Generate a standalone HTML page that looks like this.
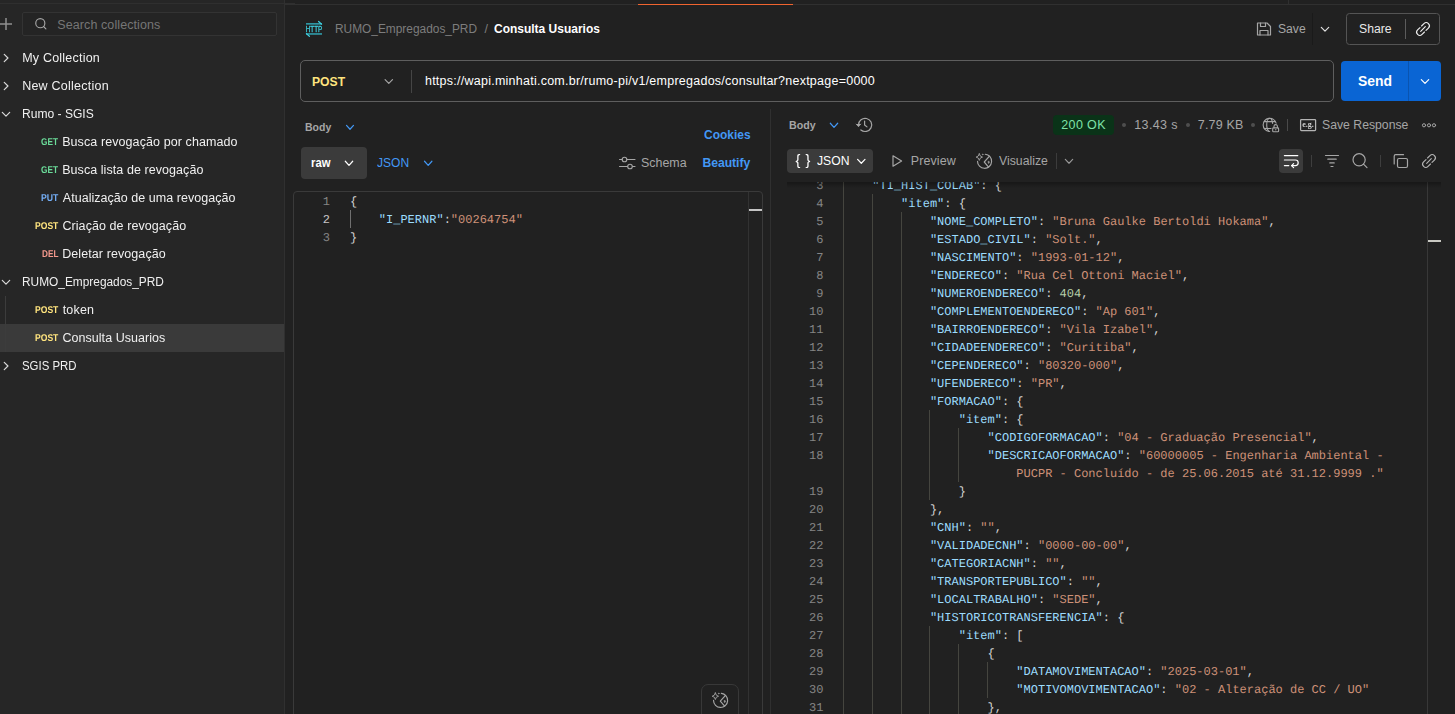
<!DOCTYPE html>
<html lang="pt-BR"><head><meta charset="utf-8"><title>Postman - Consulta Usuarios</title>
<style>
html,body{margin:0;padding:0;}
body{width:1455px;height:714px;overflow:hidden;background:#212121;position:relative;font-family:"Liberation Sans", sans-serif;}
.t{position:absolute;white-space:pre;line-height:16px;}
.b{position:absolute;box-sizing:border-box;}
.ln{position:absolute;width:40px;text-align:right;font-family:"Liberation Mono", monospace;font-size:12px;line-height:18px;color:#858585;white-space:pre;text-rendering:geometricPrecision;}
.cl{position:absolute;font-family:"Liberation Mono", monospace;font-size:12px;line-height:18px;color:#d4d4d4;white-space:pre;text-rendering:geometricPrecision;}
svg.ov{position:absolute;left:0;top:0;}
#app{position:absolute;left:0;top:0;width:1455px;height:714px;}
#sbl{position:absolute;left:0;top:40px;width:284px;height:674px;will-change:transform;}
#sbl .t{margin-top:-40px;}
#respwrap{position:absolute;left:771px;top:182px;width:684px;height:532px;overflow:hidden;}
#respin{position:absolute;left:-771px;top:-182px;width:1455px;height:714px;}
</style></head>
<body>
<div id="app">

<div class="b" style="left:0;top:0;width:284px;height:714px;background:#262626"></div>
<div class="b" style="left:0;top:3px;width:295px;height:1px;background:#2f2f2f"></div>
<div class="b" style="left:285px;top:4px;width:1170px;height:1px;background:#303030"></div>
<div class="b" style="left:638px;top:4px;width:155px;height:1px;background:#f0642f"></div>
<div class="b" style="left:284px;top:0;width:1px;height:714px;background:#303030"></div>
<div class="b" style="left:1288px;top:0;width:1px;height:4px;background:#303030"></div>
<div class="b" style="left:22px;top:12px;width:255px;height:24px;border:1px solid #333333;border-radius:2px;background:#242424"></div>
<div class="b" style="left:0;top:324px;width:284px;height:28px;background:#3a3a3a"></div>
<div class="b" style="left:5px;top:296px;width:1px;height:56px;background:#3c3c3c"></div>
<div class="b" style="left:300px;top:60px;width:1034px;height:42px;border:1px solid #5e5e5e;border-radius:5px"></div>
<div class="b" style="left:411px;top:70px;width:1px;height:23px;background:#454545"></div>
<div class="b" style="left:1341px;top:61px;width:100px;height:40px;background:#0a65d4;border-radius:4px"></div>
<div class="b" style="left:1408px;top:61px;width:1px;height:40px;background:#0a54b0"></div>
<div class="b" style="left:1346px;top:13px;width:94px;height:32px;border:1px solid #545454;border-radius:3.5px"></div>
<div class="b" style="left:1405px;top:19px;width:1px;height:20px;background:#5c5c5c"></div>
<div class="b" style="left:1312px;top:13px;width:1px;height:32px;background:#1a1a1a"></div>
<div class="b" style="left:770px;top:109px;width:1px;height:605px;background:#303030"></div>
<div class="b" style="left:301px;top:147px;width:66px;height:32px;background:#3b3b3b;border-radius:4px"></div>
<div class="b" style="left:293px;top:191px;width:470px;height:530px;border:1px solid #3a3a3a;border-radius:4px"></div>
<div class="b" style="left:748px;top:192px;width:1px;height:522px;background:#323232"></div>
<div class="b" style="left:749px;top:208.5px;width:13px;height:2px;background:#c4c4c4"></div>
<div class="b" style="left:350px;top:210px;width:1px;height:18px;background:#707070"></div>
<div class="b" style="left:701px;top:684px;width:38px;height:40px;border:1px solid #383838;border-radius:7px"></div>
<div class="b" style="left:1053px;top:115px;width:61px;height:20px;background:#0a3318;border-radius:4px"></div>
<div class="b" style="left:787px;top:149px;width:86px;height:24px;background:#3b3b3b;border-radius:4px"></div>
<div class="b" style="left:1279px;top:149px;width:24px;height:24px;background:#3b3b3b;border-radius:4px"></div>
<div class="b" style="left:1287px;top:119px;width:1px;height:12px;background:#4a4a4a"></div>
<div class="b" style="left:1056px;top:153px;width:1px;height:16px;background:#3c3c3c"></div>
<div class="b" style="left:1311px;top:155px;width:1px;height:12px;background:#3e3e3e"></div>
<div class="b" style="left:1380px;top:155px;width:1px;height:12px;background:#3e3e3e"></div>

<div class="b" style="left:1122px;top:123px;width:4px;height:4px;border-radius:2px;background:#4e4e4e"></div><div class="b" style="left:1186px;top:123px;width:4px;height:4px;border-radius:2px;background:#4e4e4e"></div><div class="b" style="left:1251px;top:123px;width:4px;height:4px;border-radius:2px;background:#4e4e4e"></div>
<span class="ln" style="left:290px;top:193px">1</span>
<span class="cl" style="left:350px;top:193px"><span style="color:#d4d4d4">{</span></span>
<span class="ln" style="left:290px;top:211px;color:#c6c6c6">2</span>
<span class="cl" style="left:350px;top:211px">    <span style="color:#9cdcfe">"I_PERNR"</span><span style="color:#d4d4d4">:</span><span style="color:#ce9178">"00264754"</span></span>
<span class="ln" style="left:290px;top:229px">3</span>
<span class="cl" style="left:350px;top:229px"><span style="color:#d4d4d4">}</span></span>

<div id="respwrap"><div id="respin">
<svg class="ov" width="1455" height="714" viewBox="0 0 1455 714"><rect x="843" y="176" width="1" height="18" fill="#45453f"/>
<rect x="843" y="194" width="1" height="18" fill="#45453f"/>
<rect x="872" y="194" width="1" height="18" fill="#45453f"/>
<rect x="843" y="212" width="1" height="18" fill="#45453f"/>
<rect x="872" y="212" width="1" height="18" fill="#45453f"/>
<rect x="901" y="212" width="1" height="18" fill="#45453f"/>
<rect x="843" y="230" width="1" height="18" fill="#45453f"/>
<rect x="872" y="230" width="1" height="18" fill="#45453f"/>
<rect x="901" y="230" width="1" height="18" fill="#45453f"/>
<rect x="843" y="248" width="1" height="18" fill="#45453f"/>
<rect x="872" y="248" width="1" height="18" fill="#45453f"/>
<rect x="901" y="248" width="1" height="18" fill="#45453f"/>
<rect x="843" y="266" width="1" height="18" fill="#45453f"/>
<rect x="872" y="266" width="1" height="18" fill="#45453f"/>
<rect x="901" y="266" width="1" height="18" fill="#45453f"/>
<rect x="843" y="284" width="1" height="18" fill="#45453f"/>
<rect x="872" y="284" width="1" height="18" fill="#45453f"/>
<rect x="901" y="284" width="1" height="18" fill="#45453f"/>
<rect x="843" y="302" width="1" height="18" fill="#45453f"/>
<rect x="872" y="302" width="1" height="18" fill="#45453f"/>
<rect x="901" y="302" width="1" height="18" fill="#45453f"/>
<rect x="843" y="320" width="1" height="18" fill="#45453f"/>
<rect x="872" y="320" width="1" height="18" fill="#45453f"/>
<rect x="901" y="320" width="1" height="18" fill="#45453f"/>
<rect x="843" y="338" width="1" height="18" fill="#45453f"/>
<rect x="872" y="338" width="1" height="18" fill="#45453f"/>
<rect x="901" y="338" width="1" height="18" fill="#45453f"/>
<rect x="843" y="356" width="1" height="18" fill="#45453f"/>
<rect x="872" y="356" width="1" height="18" fill="#45453f"/>
<rect x="901" y="356" width="1" height="18" fill="#45453f"/>
<rect x="843" y="374" width="1" height="18" fill="#45453f"/>
<rect x="872" y="374" width="1" height="18" fill="#45453f"/>
<rect x="901" y="374" width="1" height="18" fill="#45453f"/>
<rect x="843" y="392" width="1" height="18" fill="#45453f"/>
<rect x="872" y="392" width="1" height="18" fill="#45453f"/>
<rect x="901" y="392" width="1" height="18" fill="#45453f"/>
<rect x="843" y="410" width="1" height="18" fill="#45453f"/>
<rect x="872" y="410" width="1" height="18" fill="#45453f"/>
<rect x="901" y="410" width="1" height="18" fill="#45453f"/>
<rect x="929" y="410" width="1" height="18" fill="#45453f"/>
<rect x="843" y="428" width="1" height="18" fill="#45453f"/>
<rect x="872" y="428" width="1" height="18" fill="#45453f"/>
<rect x="901" y="428" width="1" height="18" fill="#45453f"/>
<rect x="929" y="428" width="1" height="18" fill="#45453f"/>
<rect x="958" y="428" width="1" height="18" fill="#45453f"/>
<rect x="843" y="446" width="1" height="18" fill="#45453f"/>
<rect x="872" y="446" width="1" height="18" fill="#45453f"/>
<rect x="901" y="446" width="1" height="18" fill="#45453f"/>
<rect x="929" y="446" width="1" height="18" fill="#45453f"/>
<rect x="958" y="446" width="1" height="18" fill="#45453f"/>
<rect x="843" y="464" width="1" height="18" fill="#45453f"/>
<rect x="872" y="464" width="1" height="18" fill="#45453f"/>
<rect x="901" y="464" width="1" height="18" fill="#45453f"/>
<rect x="929" y="464" width="1" height="18" fill="#45453f"/>
<rect x="958" y="464" width="1" height="18" fill="#45453f"/>
<rect x="843" y="482" width="1" height="18" fill="#45453f"/>
<rect x="872" y="482" width="1" height="18" fill="#45453f"/>
<rect x="901" y="482" width="1" height="18" fill="#45453f"/>
<rect x="929" y="482" width="1" height="18" fill="#45453f"/>
<rect x="843" y="500" width="1" height="18" fill="#45453f"/>
<rect x="872" y="500" width="1" height="18" fill="#45453f"/>
<rect x="901" y="500" width="1" height="18" fill="#45453f"/>
<rect x="843" y="518" width="1" height="18" fill="#45453f"/>
<rect x="872" y="518" width="1" height="18" fill="#45453f"/>
<rect x="901" y="518" width="1" height="18" fill="#45453f"/>
<rect x="843" y="536" width="1" height="18" fill="#45453f"/>
<rect x="872" y="536" width="1" height="18" fill="#45453f"/>
<rect x="901" y="536" width="1" height="18" fill="#45453f"/>
<rect x="843" y="554" width="1" height="18" fill="#45453f"/>
<rect x="872" y="554" width="1" height="18" fill="#45453f"/>
<rect x="901" y="554" width="1" height="18" fill="#45453f"/>
<rect x="843" y="572" width="1" height="18" fill="#45453f"/>
<rect x="872" y="572" width="1" height="18" fill="#45453f"/>
<rect x="901" y="572" width="1" height="18" fill="#45453f"/>
<rect x="843" y="590" width="1" height="18" fill="#45453f"/>
<rect x="872" y="590" width="1" height="18" fill="#45453f"/>
<rect x="901" y="590" width="1" height="18" fill="#45453f"/>
<rect x="843" y="608" width="1" height="18" fill="#45453f"/>
<rect x="872" y="608" width="1" height="18" fill="#45453f"/>
<rect x="901" y="608" width="1" height="18" fill="#45453f"/>
<rect x="843" y="626" width="1" height="18" fill="#45453f"/>
<rect x="872" y="626" width="1" height="18" fill="#45453f"/>
<rect x="901" y="626" width="1" height="18" fill="#45453f"/>
<rect x="929" y="626" width="1" height="18" fill="#45453f"/>
<rect x="843" y="644" width="1" height="18" fill="#45453f"/>
<rect x="872" y="644" width="1" height="18" fill="#45453f"/>
<rect x="901" y="644" width="1" height="18" fill="#45453f"/>
<rect x="929" y="644" width="1" height="18" fill="#45453f"/>
<rect x="958" y="644" width="1" height="18" fill="#45453f"/>
<rect x="843" y="662" width="1" height="18" fill="#45453f"/>
<rect x="872" y="662" width="1" height="18" fill="#45453f"/>
<rect x="901" y="662" width="1" height="18" fill="#45453f"/>
<rect x="929" y="662" width="1" height="18" fill="#45453f"/>
<rect x="958" y="662" width="1" height="18" fill="#45453f"/>
<rect x="987" y="662" width="1" height="18" fill="#45453f"/>
<rect x="843" y="680" width="1" height="18" fill="#45453f"/>
<rect x="872" y="680" width="1" height="18" fill="#45453f"/>
<rect x="901" y="680" width="1" height="18" fill="#45453f"/>
<rect x="929" y="680" width="1" height="18" fill="#45453f"/>
<rect x="958" y="680" width="1" height="18" fill="#45453f"/>
<rect x="987" y="680" width="1" height="18" fill="#45453f"/>
<rect x="843" y="698" width="1" height="18" fill="#45453f"/>
<rect x="872" y="698" width="1" height="18" fill="#45453f"/>
<rect x="901" y="698" width="1" height="18" fill="#45453f"/>
<rect x="929" y="698" width="1" height="18" fill="#45453f"/>
<rect x="958" y="698" width="1" height="18" fill="#45453f"/>
<rect x="843" y="716" width="1" height="18" fill="#45453f"/>
<rect x="872" y="716" width="1" height="18" fill="#45453f"/>
<rect x="901" y="716" width="1" height="18" fill="#45453f"/>
<rect x="929" y="716" width="1" height="18" fill="#45453f"/>
<rect x="958" y="716" width="1" height="18" fill="#45453f"/></svg>
<span class="ln" style="left:783.5px;top:177px">3</span>
<span class="cl" style="left:843.5px;top:177px">    <span style="color:#9cdcfe">"TI_HIST_COLAB"</span><span style="color:#d4d4d4">: {</span></span>
<span class="ln" style="left:783.5px;top:195px">4</span>
<span class="cl" style="left:843.5px;top:195px">        <span style="color:#9cdcfe">"item"</span><span style="color:#d4d4d4">: {</span></span>
<span class="ln" style="left:783.5px;top:213px">5</span>
<span class="cl" style="left:843.5px;top:213px">            <span style="color:#9cdcfe">"NOME_COMPLETO"</span><span style="color:#d4d4d4">: </span><span style="color:#ce9178">"Bruna Gaulke Bertoldi Hokama"</span><span style="color:#d4d4d4">,</span></span>
<span class="ln" style="left:783.5px;top:231px">6</span>
<span class="cl" style="left:843.5px;top:231px">            <span style="color:#9cdcfe">"ESTADO_CIVIL"</span><span style="color:#d4d4d4">: </span><span style="color:#ce9178">"Solt."</span><span style="color:#d4d4d4">,</span></span>
<span class="ln" style="left:783.5px;top:249px">7</span>
<span class="cl" style="left:843.5px;top:249px">            <span style="color:#9cdcfe">"NASCIMENTO"</span><span style="color:#d4d4d4">: </span><span style="color:#ce9178">"1993-01-12"</span><span style="color:#d4d4d4">,</span></span>
<span class="ln" style="left:783.5px;top:267px">8</span>
<span class="cl" style="left:843.5px;top:267px">            <span style="color:#9cdcfe">"ENDERECO"</span><span style="color:#d4d4d4">: </span><span style="color:#ce9178">"Rua Cel Ottoni Maciel"</span><span style="color:#d4d4d4">,</span></span>
<span class="ln" style="left:783.5px;top:285px">9</span>
<span class="cl" style="left:843.5px;top:285px">            <span style="color:#9cdcfe">"NUMEROENDERECO"</span><span style="color:#d4d4d4">: </span><span style="color:#b5cea8">404</span><span style="color:#d4d4d4">,</span></span>
<span class="ln" style="left:783.5px;top:303px">10</span>
<span class="cl" style="left:843.5px;top:303px">            <span style="color:#9cdcfe">"COMPLEMENTOENDERECO"</span><span style="color:#d4d4d4">: </span><span style="color:#ce9178">"Ap 601"</span><span style="color:#d4d4d4">,</span></span>
<span class="ln" style="left:783.5px;top:321px">11</span>
<span class="cl" style="left:843.5px;top:321px">            <span style="color:#9cdcfe">"BAIRROENDERECO"</span><span style="color:#d4d4d4">: </span><span style="color:#ce9178">"Vila Izabel"</span><span style="color:#d4d4d4">,</span></span>
<span class="ln" style="left:783.5px;top:339px">12</span>
<span class="cl" style="left:843.5px;top:339px">            <span style="color:#9cdcfe">"CIDADEENDERECO"</span><span style="color:#d4d4d4">: </span><span style="color:#ce9178">"Curitiba"</span><span style="color:#d4d4d4">,</span></span>
<span class="ln" style="left:783.5px;top:357px">13</span>
<span class="cl" style="left:843.5px;top:357px">            <span style="color:#9cdcfe">"CEPENDERECO"</span><span style="color:#d4d4d4">: </span><span style="color:#ce9178">"80320-000"</span><span style="color:#d4d4d4">,</span></span>
<span class="ln" style="left:783.5px;top:375px">14</span>
<span class="cl" style="left:843.5px;top:375px">            <span style="color:#9cdcfe">"UFENDERECO"</span><span style="color:#d4d4d4">: </span><span style="color:#ce9178">"PR"</span><span style="color:#d4d4d4">,</span></span>
<span class="ln" style="left:783.5px;top:393px">15</span>
<span class="cl" style="left:843.5px;top:393px">            <span style="color:#9cdcfe">"FORMACAO"</span><span style="color:#d4d4d4">: {</span></span>
<span class="ln" style="left:783.5px;top:411px">16</span>
<span class="cl" style="left:843.5px;top:411px">                <span style="color:#9cdcfe">"item"</span><span style="color:#d4d4d4">: {</span></span>
<span class="ln" style="left:783.5px;top:429px">17</span>
<span class="cl" style="left:843.5px;top:429px">                    <span style="color:#9cdcfe">"CODIGOFORMACAO"</span><span style="color:#d4d4d4">: </span><span style="color:#ce9178">"04 - Graduação Presencial"</span><span style="color:#d4d4d4">,</span></span>
<span class="ln" style="left:783.5px;top:447px">18</span>
<span class="cl" style="left:843.5px;top:447px">                    <span style="color:#9cdcfe">"DESCRICAOFORMACAO"</span><span style="color:#d4d4d4">: </span><span style="color:#ce9178">"60000005 - Engenharia Ambiental - </span></span>
<span class="cl" style="left:843.5px;top:465px">                        <span style="color:#ce9178">PUCPR - Concluído - de 25.06.2015 até 31.12.9999 ."</span></span>
<span class="ln" style="left:783.5px;top:483px">19</span>
<span class="cl" style="left:843.5px;top:483px">                <span style="color:#d4d4d4">}</span></span>
<span class="ln" style="left:783.5px;top:501px">20</span>
<span class="cl" style="left:843.5px;top:501px">            <span style="color:#d4d4d4">},</span></span>
<span class="ln" style="left:783.5px;top:519px">21</span>
<span class="cl" style="left:843.5px;top:519px">            <span style="color:#9cdcfe">"CNH"</span><span style="color:#d4d4d4">: </span><span style="color:#ce9178">""</span><span style="color:#d4d4d4">,</span></span>
<span class="ln" style="left:783.5px;top:537px">22</span>
<span class="cl" style="left:843.5px;top:537px">            <span style="color:#9cdcfe">"VALIDADECNH"</span><span style="color:#d4d4d4">: </span><span style="color:#ce9178">"0000-00-00"</span><span style="color:#d4d4d4">,</span></span>
<span class="ln" style="left:783.5px;top:555px">23</span>
<span class="cl" style="left:843.5px;top:555px">            <span style="color:#9cdcfe">"CATEGORIACNH"</span><span style="color:#d4d4d4">: </span><span style="color:#ce9178">""</span><span style="color:#d4d4d4">,</span></span>
<span class="ln" style="left:783.5px;top:573px">24</span>
<span class="cl" style="left:843.5px;top:573px">            <span style="color:#9cdcfe">"TRANSPORTEPUBLICO"</span><span style="color:#d4d4d4">: </span><span style="color:#ce9178">""</span><span style="color:#d4d4d4">,</span></span>
<span class="ln" style="left:783.5px;top:591px">25</span>
<span class="cl" style="left:843.5px;top:591px">            <span style="color:#9cdcfe">"LOCALTRABALHO"</span><span style="color:#d4d4d4">: </span><span style="color:#ce9178">"SEDE"</span><span style="color:#d4d4d4">,</span></span>
<span class="ln" style="left:783.5px;top:609px">26</span>
<span class="cl" style="left:843.5px;top:609px">            <span style="color:#9cdcfe">"HISTORICOTRANSFERENCIA"</span><span style="color:#d4d4d4">: {</span></span>
<span class="ln" style="left:783.5px;top:627px">27</span>
<span class="cl" style="left:843.5px;top:627px">                <span style="color:#9cdcfe">"item"</span><span style="color:#d4d4d4">: [</span></span>
<span class="ln" style="left:783.5px;top:645px">28</span>
<span class="cl" style="left:843.5px;top:645px">                    <span style="color:#d4d4d4">{</span></span>
<span class="ln" style="left:783.5px;top:663px">29</span>
<span class="cl" style="left:843.5px;top:663px">                        <span style="color:#9cdcfe">"DATAMOVIMENTACAO"</span><span style="color:#d4d4d4">: </span><span style="color:#ce9178">"2025-03-01"</span><span style="color:#d4d4d4">,</span></span>
<span class="ln" style="left:783.5px;top:681px">30</span>
<span class="cl" style="left:843.5px;top:681px">                        <span style="color:#9cdcfe">"MOTIVOMOVIMENTACAO"</span><span style="color:#d4d4d4">: </span><span style="color:#ce9178">"02 - Alteração de CC / UO"</span></span>
<span class="ln" style="left:783.5px;top:699px">31</span>
<span class="cl" style="left:843.5px;top:699px">                    <span style="color:#d4d4d4">},</span></span>
<span class="ln" style="left:783.5px;top:717px">32</span>
<span class="cl" style="left:843.5px;top:717px">                    <span style="color:#d4d4d4">{</span></span>
<div class="b" style="left:1427px;top:181px;width:1px;height:533px;background:#383838"></div>
<div class="b" style="left:1428px;top:240px;width:13px;height:2px;background:#c8c8c2"></div>
<div class="b" style="left:787px;top:182px;width:654px;height:6px;background:linear-gradient(#00000050,#00000000)"></div>
</div></div>

<span class="t" style="top:16.5px;font-size:12.5px;color:#767676;left:57.25px;letter-spacing:0.096px">Search collections</span>
<span class="t" style="top:21.0px;font-size:12.5px;color:#7d7d7d;left:334.59px;transform:scale(0.9510,1);transform-origin:0 78%">RUMO_Empregados_PRD</span>
<span class="t" style="top:21.0px;font-size:12.5px;color:#7d7d7d;left:484.52px;letter-spacing:0.000px">/</span>
<span class="t" style="top:21.0px;font-size:12.2px;color:#ffffff;left:493.97px;transform:scale(0.9834,1);transform-origin:0 78%;font-weight:700">Consulta Usuarios</span>
<span class="t" style="top:21.0px;font-size:12.5px;color:#a6a6a6;left:1277.67px;transform:scale(0.9710,1);transform-origin:0 78%">Save</span>
<span class="t" style="top:21.0px;font-size:12.5px;color:#e8e8e8;left:1359.16px;transform:scale(0.9785,1);transform-origin:0 78%">Share</span>
<span class="t" style="top:73.5px;font-size:12.4px;color:#ffe47e;left:312.49px;transform:scale(0.9811,1);transform-origin:0 78%;font-weight:700">POST</span>
<span class="t" style="top:73.0px;font-size:12.5px;color:#ffffff;left:424.95px;letter-spacing:0.250px">https://wapi.minhati.com.br/rumo-pi/v1/empregados/consultar?nextpage=0000</span>
<span class="t" style="top:72.6px;font-size:14.3px;color:#ffffff;left:1357.64px;transform:scale(0.9736,1);transform-origin:0 78%;font-weight:700">Send</span>
<span class="t" style="top:119.0px;font-size:11.2px;color:#a6a6a6;left:304.97px;transform:scale(0.9375,1);transform-origin:0 78%;font-weight:700">Body</span>
<span class="t" style="top:126.5px;font-size:12.2px;color:#4398f5;left:703.97px;transform:scale(0.9815,1);transform-origin:0 78%;font-weight:700">Cookies</span>
<span class="t" style="top:155.0px;font-size:12.2px;color:#ffffff;left:310.73px;transform:scale(0.9247,1);transform-origin:0 78%;font-weight:700">raw</span>
<span class="t" style="top:155.0px;font-size:12.5px;color:#4398f5;left:377.04px;transform:scale(0.9632,1);transform-origin:0 78%">JSON</span>
<span class="t" style="top:155.0px;font-size:12.5px;color:#a6a6a6;left:640.85px;transform:scale(0.9938,1);transform-origin:0 78%">Schema</span>
<span class="t" style="top:155.0px;font-size:12.2px;color:#4398f5;left:702.40px;letter-spacing:-0.033px;font-weight:700">Beautify</span>
<span class="t" style="top:116.8px;font-size:11.2px;color:#a6a6a6;left:788.76px;transform:scale(0.9522,1);transform-origin:0 78%;font-weight:700">Body</span>
<span class="t" style="top:116.8px;font-size:12.5px;color:#7ee2a8;left:1061.23px;letter-spacing:0.384px">200 OK</span>
<span class="t" style="top:116.8px;font-size:12.5px;color:#a6a6a6;left:1134.28px;letter-spacing:0.376px">13.43 s</span>
<span class="t" style="top:116.8px;font-size:12.5px;color:#a6a6a6;left:1197.83px;letter-spacing:0.169px">7.79 KB</span>
<span class="t" style="top:116.8px;font-size:12.5px;color:#a6a6a6;left:1322.46px;transform:scale(0.9789,1);transform-origin:0 78%">Save Response</span>
<span class="t" style="top:153.0px;font-size:12.5px;color:#ffffff;left:817.04px;transform:scale(0.9725,1);transform-origin:0 78%">JSON</span>
<span class="t" style="top:153.0px;font-size:12.5px;color:#a6a6a6;left:910.75px;letter-spacing:0.105px">Preview</span>
<span class="t" style="top:153.0px;font-size:12.5px;color:#a6a6a6;left:998.99px;transform:scale(0.9813,1);transform-origin:0 78%">Visualize</span>
<div id="sbl">
<span class="t" style="top:50.0px;font-size:12.5px;color:#f0f0f0;left:22.15px;letter-spacing:0.217px">My Collection</span>
<span class="t" style="top:78.0px;font-size:12.5px;color:#f0f0f0;left:22.15px;letter-spacing:0.243px">New Collection</span>
<span class="t" style="top:106.0px;font-size:12.5px;color:#f0f0f0;left:22.18px;transform:scale(0.9658,1);transform-origin:0 78%">Rumo - SGIS</span>
<span class="t" style="top:135.0px;font-size:9.8px;color:#6bdd9a;left:40.80px;transform:scale(0.8395,1);transform-origin:0 78%;font-weight:700;text-rendering:geometricPrecision">GET</span>
<span class="t" style="top:134.0px;font-size:12.5px;color:#f0f0f0;left:62.15px;letter-spacing:0.091px">Busca revogação por chamado</span>
<span class="t" style="top:163.0px;font-size:9.8px;color:#6bdd9a;left:40.80px;transform:scale(0.8395,1);transform-origin:0 78%;font-weight:700;text-rendering:geometricPrecision">GET</span>
<span class="t" style="top:162.0px;font-size:12.5px;color:#f0f0f0;left:62.15px;letter-spacing:0.070px">Busca lista de revogação</span>
<span class="t" style="top:191.0px;font-size:9.8px;color:#74aef6;left:40.60px;transform:scale(0.8851,1);transform-origin:0 78%;font-weight:700;text-rendering:geometricPrecision">PUT</span>
<span class="t" style="top:190.0px;font-size:12.5px;color:#f0f0f0;left:62.80px;letter-spacing:0.035px">Atualização de uma revogação</span>
<span class="t" style="top:219.0px;font-size:9.8px;color:#ffe47e;left:34.50px;transform:scale(0.8746,1);transform-origin:0 78%;font-weight:700;text-rendering:geometricPrecision">POST</span>
<span class="t" style="top:218.0px;font-size:12.5px;color:#f0f0f0;left:62.42px;letter-spacing:0.078px">Criação de revogação</span>
<span class="t" style="top:247.0px;font-size:9.8px;color:#f79a8e;left:41.52px;transform:scale(0.8385,1);transform-origin:0 78%;font-weight:700;text-rendering:geometricPrecision">DEL</span>
<span class="t" style="top:246.0px;font-size:12.5px;color:#f0f0f0;left:62.15px;letter-spacing:0.091px">Deletar revogação</span>
<span class="t" style="top:274.0px;font-size:12.5px;color:#f0f0f0;left:22.20px;transform:scale(0.9503,1);transform-origin:0 78%">RUMO_Empregados_PRD</span>
<span class="t" style="top:303.0px;font-size:9.8px;color:#ffe47e;left:34.50px;transform:scale(0.8746,1);transform-origin:0 78%;font-weight:700;text-rendering:geometricPrecision">POST</span>
<span class="t" style="top:302.0px;font-size:12.5px;color:#f0f0f0;left:62.71px;letter-spacing:0.179px">token</span>
<span class="t" style="top:331.0px;font-size:9.8px;color:#ffe47e;left:34.50px;transform:scale(0.8746,1);transform-origin:0 78%;font-weight:700;text-rendering:geometricPrecision">POST</span>
<span class="t" style="top:330.0px;font-size:12.5px;color:#f0f0f0;left:62.42px;letter-spacing:0.051px">Consulta Usuarios</span>
<span class="t" style="top:358.0px;font-size:12.5px;color:#f0f0f0;left:22.31px;transform:scale(0.9126,1);transform-origin:0 78%">SGIS PRD</span>
</div>
<svg class="ov" style="will-change:transform" width="1455" height="714" viewBox="0 0 1455 714" fill="none" stroke-linecap="round" stroke-linejoin="round">
<path d="M0 24.1H12M6 18.1V30" stroke="#909090" stroke-width="1.5" stroke-linecap="butt"/>
<circle cx="40.3" cy="23.2" r="4.55" stroke="#a6a6a6" stroke-width="1.15"/><path d="M43.6 26.5L45.9 28.8" stroke="#a6a6a6" stroke-width="1.15"/>
<path d="M4.25 54.3L7.949999999999999 58L4.25 61.7" stroke="#dadada" stroke-width="1.2"/>
<path d="M4.25 82.3L7.949999999999999 86L4.25 89.7" stroke="#dadada" stroke-width="1.2"/>
<path d="M4.25 362.3L7.949999999999999 366L4.25 369.7" stroke="#dadada" stroke-width="1.2"/>
<path d="M2.3 112.35000000000001L6 116.05L9.7 112.35000000000001" stroke="#dadada" stroke-width="1.2"/>
<path d="M2.3 280.34999999999997L6 284.05L9.7 280.34999999999997" stroke="#dadada" stroke-width="1.2"/>
<rect x="306" y="23" width="16" height="1.7" fill="#2f95a2"/><rect x="306" y="33.1" width="16" height="1.7" fill="#2f95a2"/>
<path d="M318.6 21.5L321.6 24.2M309.4 36.3L306.4 33.6" stroke="#3fd0e0" stroke-width="1.2"/>
<text x="305.8" y="32.1" font-family="Liberation Sans, sans-serif" font-size="8.3" fill="#3fd0e0" stroke="#3fd0e0" stroke-width="0.3" textLength="16.4" lengthAdjust="spacingAndGlyphs">HTTP</text>
<g stroke="#a6a6a6" stroke-width="1.2"><path d="M1257.5 23H1267L1270.5 26.5V35H1257.5Z"/><path d="M1260.5 23V26.5H1265.5V23"/><path d="M1260 35V30.5H1268V35"/></g>
<path d="M1321.3 27.45L1325 31.150000000000002L1328.7 27.45" stroke="#e0e0e0" stroke-width="1.2"/>
<g transform="translate(1423 29) rotate(-45) scale(0.9)" stroke="#efefef" stroke-width="1.25"><path d="M-1.2 -3.5H-5A3.5 3.5 0 0 0 -5 3.5H-1.2"/><path d="M1.2 -3.5H5A3.5 3.5 0 0 1 5 3.5H1.2"/><path d="M-3.6 0H3.6"/></g>
<path d="M385.1 79.65L388.8 83.35L392.5 79.65" stroke="#a6a6a6" stroke-width="1.2"/>
<path d="M1421.3 79.65L1425 83.35L1428.7 79.65" stroke="#ffffff" stroke-width="1.2"/>
<path d="M346.5 125.35L350 129.25L353.5 125.35" stroke="#4398f5" stroke-width="1.2"/>
<path d="M345.3 161.25L349 165.35000000000002L352.7 161.25" stroke="#ffffff" stroke-width="1.2"/>
<path d="M424.5 161.25L428.2 165.35000000000002L431.9 161.25" stroke="#4398f5" stroke-width="1.2"/>
<g stroke="#a6a6a6" stroke-width="1.1"><path d="M619.5 159.5H622M627 159.5H635"/><circle cx="624.5" cy="159.5" r="2.3"/><path d="M619.5 166.5H627.5M632.5 166.5H635"/><circle cx="630" cy="166.5" r="2.3"/></g>
<path d="M830.3 123.25L834 127.35L837.7 123.25" stroke="#4398f5" stroke-width="1.2"/>
<g stroke="#a6a6a6" stroke-width="1.2"><path d="M858.5 124.9A6.6 6.6 0 1 1 860.86 129.96"/><path d="M856.2 124.1L858.5 126.7L860.8 124.1" fill="#a6a6a6" stroke-width="0.8"/><path d="M864.6 121.1V125L867 126.9"/></g>
<g stroke="#a6a6a6" stroke-width="1.1"><path d="M1276.1 123.2A6.6 6.6 0 1 0 1269.1 131.5"/><path d="M1264.3 121.6H1275.1M1264.3 128.5H1271"/><path d="M1269.7 118.3A3 6.6 0 0 0 1269.7 131.5M1269.7 118.3A3 6.6 0 0 1 1272.6 123.4"/><rect x="1272.7" y="127.9" width="5.9" height="3.8" rx="0.8"/><path d="M1274 127.7V126.3A1.7 1.7 0 0 1 1277.4 126.3V127.7"/><circle cx="1275.65" cy="129.8" r="0.35" fill="#a6a6a6" stroke-width="0.5"/></g>
<rect x="1300.6" y="119.5" width="15" height="11.1" rx="0.8" stroke="#b4b4b4" stroke-width="1.25"/>
<text x="1308.1" y="126.9" text-anchor="middle" font-family="Liberation Serif, serif" font-size="8" font-weight="700" fill="#d0d0d0" stroke="none">e.g.</text>
<circle cx="1424" cy="125.3" r="1.6" stroke="#a6a6a6" stroke-width="1"/>
<circle cx="1429" cy="125.3" r="1.6" stroke="#a6a6a6" stroke-width="1"/>
<circle cx="1434" cy="125.3" r="1.6" stroke="#a6a6a6" stroke-width="1"/>
<text x="795.6" y="164.8" font-family="Liberation Sans, sans-serif" font-size="14.5" fill="#ffffff" stroke="none" textLength="14.8" lengthAdjust="spacing">{ }</text>
<path d="M857.5999999999999 159.35000000000002L861.3 163.25L865.0 159.35000000000002" stroke="#ffffff" stroke-width="1.2"/>
<path d="M893 155.8V166.2L901.6 161Z" stroke="#a6a6a6" stroke-width="1.2"/>
<g stroke="#a6a6a6" stroke-width="1.15"><path d="M985.29 154.24A7.05 7.05 0 1 1 977.50 161.25"/><path d="M989.48 156.21L984.25 162.00L988.59 167.03"/><ellipse cx="988.60" cy="162.20" rx="0.35" ry="1.3" stroke-width="0.8"/><path d="M979.30 153.80Q979.65 156.75 982.50 157.10Q979.65 157.45 979.30 160.40Q978.95 157.45 976.10 157.10Q978.95 156.75 979.30 153.80Z" stroke-width="0.9"/><circle cx="982.70" cy="154.40" r="0.45" fill="#a6a6a6" stroke-width="0.5"/></g>
<path d="M1065.3 159.35000000000002L1069 163.25L1072.7 159.35000000000002" stroke="#9a9a9a" stroke-width="1.1"/>
<g stroke="#ffffff" stroke-width="1.2"><path d="M1284.4 155.6H1297.8"/><path d="M1284.4 160H1295.4A2.8 2.8 0 0 1 1295.4 165.6H1291.6"/><path d="M1293.6 163.6L1291.6 165.6L1293.6 167.6"/><path d="M1284.4 165.6H1288.8"/></g>
<path d="M1325.5 155.5H1338.5M1327.8 159.2H1336.2M1329.8 162.9H1334.2M1331 166.5H1333" stroke="#a6a6a6" stroke-width="1.2"/>
<circle cx="1359.1" cy="159.8" r="6.1" stroke="#a6a6a6" stroke-width="1.2"/><path d="M1363.5 164.2L1367 167.7" stroke="#a6a6a6" stroke-width="1.2"/>
<g stroke="#a6a6a6" stroke-width="1.2"><rect x="1397.5" y="158.5" width="10" height="9" rx="1.5"/><path d="M1394.2 164V156.2A1.5 1.5 0 0 1 1395.7 154.7H1403.5"/></g>
<g transform="translate(1429 161) rotate(-45) scale(0.9)" stroke="#b4b4b4" stroke-width="1.25"><path d="M-1.2 -3.5H-5A3.5 3.5 0 0 0 -5 3.5H-1.2"/><path d="M1.2 -3.5H5A3.5 3.5 0 0 1 5 3.5H1.2"/><path d="M-3.6 0H3.6"/></g>
<g stroke="#a6a6a6" stroke-width="1.15"><path d="M721.34 693.39A7.05 7.05 0 1 1 713.55 700.40"/><path d="M725.53 695.36L720.30 701.15L724.64 706.18"/><ellipse cx="724.65" cy="701.35" rx="0.35" ry="1.3" stroke-width="0.8"/><path d="M715.35 692.95Q715.70 695.90 718.55 696.25Q715.70 696.60 715.35 699.55Q715.00 696.60 712.15 696.25Q715.00 695.90 715.35 692.95Z" stroke-width="0.9"/><circle cx="718.75" cy="693.55" r="0.45" fill="#a6a6a6" stroke-width="0.5"/></g>
</svg>
</div>
</body></html>
